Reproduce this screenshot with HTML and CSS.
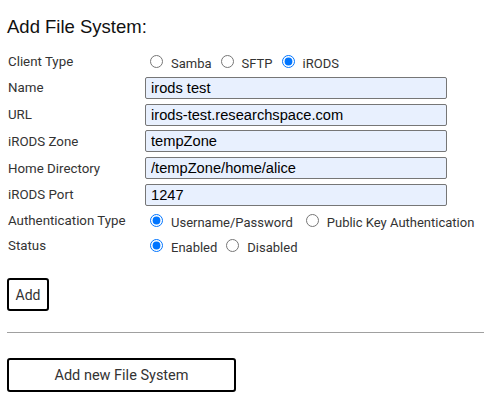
FILE: index.html
```html
<!DOCTYPE html>
<html>
<head>
<meta charset="utf-8">
<link rel="stylesheet" href="styles.css">
</head>
<body>
<div class="page">
  <h2 class="title">Add File System:</h2>
  <form class="form">
    <div class="label">Client Type</div>
    <div class="options">
      <label class="opt"><input type="radio" name="ct"><span>Samba</span></label>
      <label class="opt"><input type="radio" name="ct"><span>SFTP</span></label>
      <label class="opt"><input type="radio" name="ct" checked><span>iRODS</span></label>
    </div>
    <div class="label">Name</div>
    <div class="field"><input class="text" type="text" value="irods test"></div>
    <div class="label">URL</div>
    <div class="field"><input class="text" type="text" value="irods-test.researchspace.com"></div>
    <div class="label">iRODS Zone</div>
    <div class="field"><input class="text" type="text" value="tempZone"></div>
    <div class="label">Home Directory</div>
    <div class="field"><input class="text" type="text" value="/tempZone/home/alice"></div>
    <div class="label">iRODS Port</div>
    <div class="field"><input class="text" type="text" value="1247"></div>
    <div class="label">Authentication Type</div>
    <div class="options">
      <label class="opt opt-wide"><input type="radio" name="auth" checked><span>Username/Password</span></label>
      <label class="opt"><input type="radio" name="auth"><span>Public Key Authentication</span></label>
    </div>
    <div class="label">Status</div>
    <div class="options">
      <label class="opt"><input type="radio" name="st" checked><span>Enabled</span></label>
      <label class="opt"><input type="radio" name="st"><span>Disabled</span></label>
    </div>
  </form>
  <button class="btn btn-add" type="button">Add</button>
  <hr class="rule">
  <button class="btn btn-new" type="button">Add new File System</button>
</div>
</body>
</html>
```

FILE: styles.css
```css
html, body {
  margin: 0;
  padding: 0;
  background: #fff;
}
.page {
  padding-left: 7px;
  font-family: Roboto, "Liberation Sans", Arial, sans-serif;
  color: #333;
}
.title {
  font-family: "Liberation Sans", Arial, sans-serif;
  font-weight: normal;
  font-size: 18.5px;
  line-height: 22px;
  color: #111;
  margin: 16px 0 12px 0;
}
.form {
  display: grid;
  grid-template-columns: 138px 1fr;
  grid-template-rows: 22px 22px 22px 22px 22px 22px 20px 20px;
  row-gap: 4.75px;
  align-items: center;
  margin: 0;
}
.label {
  padding-left: 1px;
  font-size: 13.3px;
  color: #333;
  white-space: nowrap;
}
.options {
  display: flex;
  align-items: center;
  font-size: 13px;
  color: #333;
  white-space: nowrap;
}
.opt {
  display: flex;
  align-items: center;
  flex-shrink: 0;
  margin-right: 4px;
}
.opt-wide {
  margin-right: 8px;
}
.opt input {
  margin: 0 8px 0 5px;
  width: 13px;
  height: 13px;
  flex-shrink: 0;
}
.opt span {
  position: relative;
  top: 2px;
  white-space: nowrap;
}
.field {
  display: flex;
}
.text {
  box-sizing: border-box;
  width: 302px;
  height: 22px;
  margin: 0;
  padding: 0 5px;
  border: 1px solid #767676;
  border-radius: 2px;
  background: #e8f0fe;
  font-family: "Liberation Sans", Arial, sans-serif;
  font-size: 14.67px;
  color: #000;
}
.btn {
  display: block;
  box-sizing: border-box;
  background: #fff;
  border: 2px solid #000;
  border-radius: 3px;
  font-family: Roboto, "Liberation Sans", Arial, sans-serif;
  font-size: 14px;
  color: #333;
  padding: 0;
}
.btn-add {
  width: 42px;
  height: 33px;
  margin-top: 23px;
}
.rule {
  border: 0;
  border-top: 1px solid #a0a0a0;
  margin: 21px 0 0 0;
  height: 0;
}
.btn-new {
  width: 229px;
  height: 34px;
  margin-top: 25px;
  font-size: 14.5px;
}
```
